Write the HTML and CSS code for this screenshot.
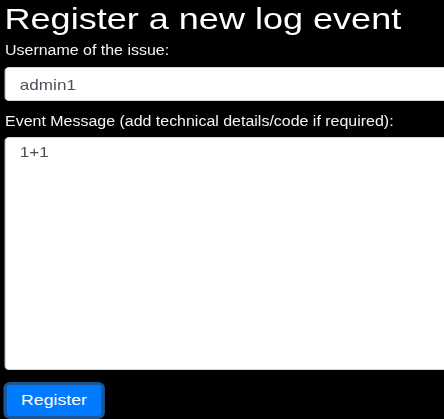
FILE: index.html
```html
<!DOCTYPE html>
<html>
<head>
<meta charset="utf-8">
<link rel="stylesheet" href="styles.css">
</head>
<body>
<main class="page">
  <h1 class="title"><span class="title-text">Register a new log event</span></h1>
  <form class="form">
    <label class="label" for="user">Username of the issue:</label>
    <input class="field" id="user" type="text" value="admin1">
    <label class="label label-msg" for="msg">Event Message (add technical details/code if required):</label>
    <textarea class="field area" id="msg">1+1</textarea>
    <button class="btn" type="button">Register</button>
  </form>
</main>
</body>
</html>
```
FILE: styles.css
```css
html, body {
  margin: 0;
  padding: 0;
  background: #000;
  overflow: hidden;
  width: 444px;
  height: 419px;
}
body {
  font-family: "Liberation Sans", Arial, sans-serif;
  color: #fff;
}
.page {
  box-sizing: border-box;
  width: 392px;
  padding: 0 0 0 4.4px;
  transform: scaleX(1.14);
  transform-origin: 0 0;
}
.title {
  margin: 0;
  padding-top: 2px;
  font-size: 29px;
  font-weight: normal;
  line-height: 34px;
  color: #fff;
  white-space: nowrap;
}
.title-text {
  display: inline-block;
  transform: scaleX(1.09);
  transform-origin: 0 0;
}
.form {
  display: flex;
  flex-direction: column;
  align-items: flex-start;
}
.label {
  display: block;
  font-size: 14px;
  line-height: 20px;
  margin-top: 4px;
  color: #f4f4f4;
  white-space: nowrap;
}
.label-msg {
  margin-top: 10px;
}
.field {
  box-sizing: border-box;
  width: 392px;
  height: 34px;
  margin-top: 7px;
  padding: 0 12px;
  border: 1px solid #ced4da;
  border-radius: 4px;
  background: #fff;
  font-family: "Liberation Sans", Arial, sans-serif;
  font-size: 15px;
  color: #495057;
  outline: none;
}
.area {
  display: block;
  height: 232.5px;
  margin-top: 6px;
  padding: 5px 12px;
  line-height: 18px;
  resize: none;
  overflow: hidden;
}
.btn {
  margin-top: 12px;
  margin-left: -1.8px;
  box-sizing: border-box;
  width: 89.5px;
  height: 37px;
  border: 3px solid #1b5797;
  border-radius: 6px;
  background: #007bff;
  color: #fff;
  font-family: "Liberation Sans", Arial, sans-serif;
  font-size: 15.5px;
  padding: 0 0 1px;
}
```
